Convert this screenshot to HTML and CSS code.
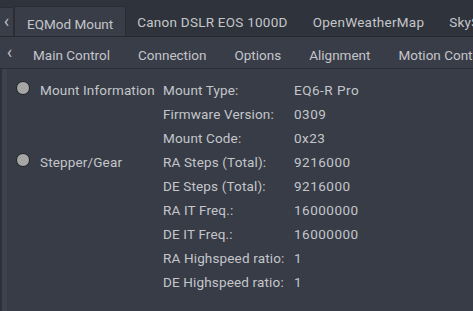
FILE: index.html
```html
<!DOCTYPE html>
<html>
<head>
<meta charset="utf-8">
<link rel="stylesheet" href="styles.css">
</head>
<body>
<div class="app">
  <div class="tabbar top">
    <div class="scroll-btn">&lsaquo;</div>
    <div class="tab active">EQMod Mount</div>
    <div class="tab">Canon DSLR EOS 1000D</div>
    <div class="tab">OpenWeatherMap</div>
    <div class="tab">SkySafari</div>
  </div>
  <div class="tabbar sub">
    <div class="scroll-btn2">&lsaquo;</div>
    <div class="tab2">Main Control</div>
    <div class="tab2">Connection</div>
    <div class="tab2">Options</div>
    <div class="tab2">Alignment</div>
    <div class="tab2">Motion Control</div>
  </div>
  <div class="panel">
    <div class="group">
      <div class="group-head"><span class="led"></span><span class="gname">Mount Information</span></div>
      <div class="props">
        <div class="row"><span class="lbl">Mount Type:</span><span class="val">EQ6-R Pro</span></div>
        <div class="row"><span class="lbl">Firmware Version:</span><span class="val">0309</span></div>
        <div class="row"><span class="lbl">Mount Code:</span><span class="val">0x23</span></div>
      </div>
    </div>
    <div class="group">
      <div class="group-head"><span class="led"></span><span class="gname">Stepper/Gear</span></div>
      <div class="props">
        <div class="row"><span class="lbl">RA Steps (Total):</span><span class="val">9216000</span></div>
        <div class="row"><span class="lbl">DE Steps (Total):</span><span class="val">9216000</span></div>
        <div class="row"><span class="lbl">RA IT Freq.:</span><span class="val">16000000</span></div>
        <div class="row"><span class="lbl">DE IT Freq.:</span><span class="val">16000000</span></div>
        <div class="row"><span class="lbl">RA Highspeed ratio:</span><span class="val">1</span></div>
        <div class="row"><span class="lbl">DE Highspeed ratio:</span><span class="val">1</span></div>
      </div>
    </div>
  </div>
</div>
</body>
</html>
```
FILE: styles.css
```css
html, body {
  margin: 0;
  padding: 0;
  width: 473px;
  height: 311px;
  overflow: hidden;
  background: #30343d;
  font-family: Roboto, "Noto Sans", sans-serif;
  font-size: 13.5px;
  letter-spacing: 0.15px;
  color: #c4c6ca;
}
.app {
  display: flex;
  flex-direction: column;
  height: 311px;
}
.tabbar {
  display: flex;
  align-items: stretch;
  white-space: nowrap;
  overflow: hidden;
  flex: none;
}
.top {
  height: 37px;
  background: #2f333b;
  border-bottom: 1px solid #262930;
  box-sizing: border-box;
  padding-top: 6px;
}
.scroll-btn {
  width: 14px;
  flex: none;
  background: #3a3e48;
  border: 1px solid #2a2d34;
  border-left: none;
  border-bottom: none;
  box-sizing: border-box;
  font-size: 18px;
  line-height: 26px;
  text-align: center;
  color: #b8bcc2;
  margin-top: 1px;
}
.tab {
  padding: 2px 12px 0 12px;
  display: flex;
  align-items: center;
  flex: none;
}
.tab.active {
  background: #393d48;
  border: 1px solid #2a2d34;
  border-bottom: none;
  margin-bottom: -1px;
  padding: 3px 12px 0 12px;
  letter-spacing: 0;
}
.tab + .tab:not(.active) {
  padding-left: 11px;
  padding-right: 14px;
  letter-spacing: 0.25px;
}
.sub {
  height: 32px;
  background: #393d48;
  border-bottom: 1px solid #2c2f36;
  box-sizing: border-box;
  letter-spacing: 0;
}
.scroll-btn2 {
  width: 19px;
  flex: none;
  font-size: 18px;
  line-height: 30px;
  text-align: center;
  color: #b8bcc2;
}
.tab2 {
  display: flex;
  align-items: center;
  padding: 4px 14px 0 14px;
  flex: none;
}
.panel {
  flex: 1;
  background: #373c47;
  border-left: 2px solid #2e3139;
  box-shadow: inset 5px 0 0 #3d424d;
  padding: 9px 0 0 14px;
  display: flex;
  flex-direction: column;
}
.group {
  display: flex;
}
.group-head {
  width: 147px;
  flex: none;
  display: flex;
  align-items: flex-start;
  height: 24px;
  line-height: 24px;
}
.led {
  width: 12px;
  height: 12px;
  border-radius: 50%;
  background: #a6a6a6;
  border: 1px solid #1e2025;
  margin-top: 3px;
  margin-right: 10px;
  flex: none;
}
.props {
  display: flex;
  flex-direction: column;
}
.row {
  display: flex;
  height: 24px;
  line-height: 24px;
}
.lbl {
  width: 131px;
  flex: none;
}
.val {
  letter-spacing: 0.5px;
}
```
